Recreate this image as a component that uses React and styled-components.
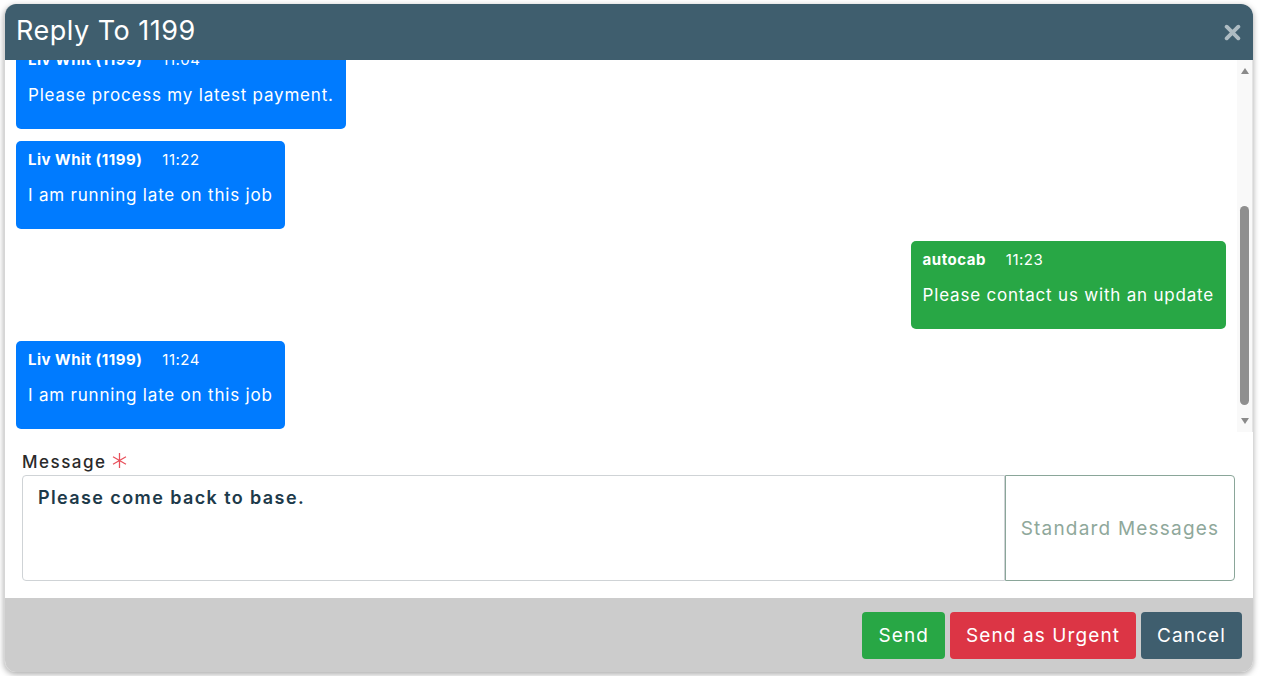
import React, { useLayoutEffect, useRef, useState } from 'react'
import styled, { createGlobalStyle } from 'styled-components'

const GlobalStyle = createGlobalStyle`
  html, body {
    margin: 0;
    padding: 0;
    background: #ffffff;
    font-family: Inter, "Noto Sans", Arial, sans-serif;
  }
`

const messages = [
  { from: 'Liv Whit (1199)', time: '10:41', text: 'On my way to the pickup', mine: false },
  { from: 'autocab', time: '10:52', text: 'Thanks, keep us posted', mine: true },
  { from: 'Liv Whit (1199)', time: '11:04', text: 'Please process my latest payment.', mine: false },
  { from: 'Liv Whit (1199)', time: '11:22', text: 'I am running late on this job', mine: false },
  { from: 'autocab', time: '11:23', text: 'Please contact us with an update', mine: true },
  { from: 'Liv Whit (1199)', time: '11:24', text: 'I am running late on this job', mine: false },
]

const ReplyDialog = () => {
  const listRef = useRef(null)
  const trackRef = useRef(null)
  const [thumb, setThumb] = useState({ top: 0, height: 0 })

  useLayoutEffect(() => {
    const list = listRef.current
    const track = trackRef.current
    if (!list || !track) return
    list.scrollTop = 231
    const ratio = list.clientHeight / list.scrollHeight
    const len = track.clientHeight
    setThumb({
      top: Math.round((list.scrollTop / list.scrollHeight) * len),
      height: Math.round(ratio * len),
    })
  }, [])

  return (
    <Page>
      <GlobalStyle />
      <Modal>
        <Header>
          <Title>Reply To 1199</Title>
          <CloseButton aria-label="Close">
            <svg width="17" height="17" viewBox="0 0 16 16">
              <path d="M2.5 2.5 L13.5 13.5 M13.5 2.5 L2.5 13.5" stroke="#aebcc3" strokeWidth="3.6" strokeLinecap="round" />
            </svg>
          </CloseButton>
        </Header>
        <Conversation>
          <MessageList ref={listRef}>
            {messages.map((m, i) => (
              <Bubble key={i} $mine={m.mine}>
                <BubbleHead>
                  <Sender>{m.from}</Sender>
                  <Time>{m.time}</Time>
                </BubbleHead>
                <BubbleText>{m.text}</BubbleText>
              </Bubble>
            ))}
          </MessageList>
          <ScrollBar>
            <ArrowButton $dir="up" />
            <Track ref={trackRef}>
              <Thumb style={{ marginTop: thumb.top, height: thumb.height }} />
            </Track>
            <ArrowButton $dir="down" />
          </ScrollBar>
        </Conversation>
        <Compose>
          <Label>
            Message
            <svg width="17" height="17" viewBox="0 0 16 16">
              <path d="M8 1 V15 M1.9 4.5 L14.1 11.5 M14.1 4.5 L1.9 11.5" stroke="#e8505b" strokeWidth="1.2" />
            </svg>
          </Label>
          <InputRow>
            <MessageInput defaultValue="Please come back to base." />
            <StandardButton>Standard Messages</StandardButton>
          </InputRow>
        </Compose>
        <Footer>
          <ActionButton $bg="#28a745">Send</ActionButton>
          <ActionButton $bg="#dc3545">Send as Urgent</ActionButton>
          <ActionButton $bg="#3f5e6e">Cancel</ActionButton>
        </Footer>
      </Modal>
    </Page>
  )
}

export default ReplyDialog

const Page = styled.div`
  padding: 4px;
`

const Modal = styled.div`
  width: 1249px;
  height: 668px;
  display: flex;
  flex-direction: column;
  border-radius: 12px;
  overflow: hidden;
  background: #ffffff;
  box-shadow: 0 2px 6px rgba(0, 0, 0, 0.35);
  box-sizing: border-box;
  border-left: 1px solid #d6d6d6;
`

const Header = styled.div`
  height: 56px;
  flex: none;
  display: flex;
  align-items: center;
  justify-content: space-between;
  background: #3f5e6e;
  padding: 0 12px 0 11px;
`

const Title = styled.h1`
  margin: 0 0 3px;
  font-size: 27px;
  font-weight: 400;
  color: #ffffff;
  letter-spacing: 0.5px;
`

const CloseButton = styled.button`
  border: none;
  background: none;
  padding: 0;
  display: flex;
  cursor: pointer;
`

const Conversation = styled.div`
  height: 372px;
  flex: none;
  display: flex;
`

const MessageList = styled.div`
  flex: 1;
  overflow: hidden;
  display: flex;
  flex-direction: column;
  gap: 12px;
  padding: 12px 11px 12px 11px;
  box-sizing: border-box;
`

const ScrollBar = styled.div`
  width: 15px;
  flex: none;
  display: flex;
  flex-direction: column;
  background: #f9f9f9;
  border-right: 1px solid #e4e4e4;
`

const ArrowButton = styled.div`
  height: 22px;
  flex: none;
  display: flex;
  align-items: center;
  justify-content: center;

  &::before {
    content: '';
    width: 0;
    height: 0;
    border-left: 4px solid transparent;
    border-right: 4px solid transparent;
    ${p => (p.$dir === 'up'
      ? 'border-bottom: 6px solid #8a8a8a;'
      : 'border-top: 6px solid #8a8a8a;')}
  }
`

const Track = styled.div`
  flex: 1;
  display: flex;
  flex-direction: column;
  align-items: center;
`

const Thumb = styled.div`
  width: 9px;
  border-radius: 5px;
  background: #8f8f8f;
`

const Bubble = styled.div`
  align-self: ${p => (p.$mine ? 'flex-end' : 'flex-start')};
  flex: none;
  height: 88px;
  box-sizing: border-box;
  padding: 8px 12px 0;
  border-radius: 5px;
  color: #ffffff;
  background: ${p => (p.$mine ? '#28a745' : '#007bff')};
`

const BubbleHead = styled.div`
  display: flex;
  gap: 20px;
  height: 20px;
  align-items: center;
  font-size: 15px;
`

const Sender = styled.span`
  font-weight: 700;
  letter-spacing: 0.5px;
`

const Time = styled.span`
  font-weight: 400;
  letter-spacing: 0.5px;
`

const BubbleText = styled.div`
  margin-top: 16px;
  font-size: 17px;
  line-height: 20px;
  letter-spacing: 0.8px;
  white-space: nowrap;
`

const Compose = styled.div`
  flex: 1;
  padding: 20px 18px 0 17px;
`

const Label = styled.div`
  display: flex;
  align-items: flex-start;
  gap: 4px;
  font-size: 17px;
  font-weight: 500;
  letter-spacing: 1.5px;
  color: #2a2a2a;
  height: 23px;
  line-height: 21px;
`

const InputRow = styled.div`
  display: flex;
  height: 106px;
`

const MessageInput = styled.textarea`
  flex: 1;
  resize: none;
  box-sizing: border-box;
  border: 1px solid #cfd3d6;
  border-radius: 4px 0 0 4px;
  padding: 11px 15px;
  font-family: inherit;
  font-size: 18px;
  font-weight: 600;
  letter-spacing: 1.4px;
  color: #1d3a4a;
  outline: none;
`

const StandardButton = styled.button`
  width: 230px;
  box-sizing: border-box;
  border: 1px solid #8aa699;
  border-radius: 0 4px 4px 0;
  background: #ffffff;
  font-family: inherit;
  font-size: 19px;
  letter-spacing: 1.2px;
  color: #8fa89b;
  cursor: pointer;
`

const Footer = styled.div`
  height: 74px;
  flex: none;
  display: flex;
  justify-content: flex-end;
  align-items: center;
  gap: 5px;
  padding: 0 11px;
  background: #cccccc;
`

const ActionButton = styled.button`
  height: 47px;
  padding: 0 16px;
  border: none;
  border-radius: 4px;
  background: ${p => p.$bg};
  color: #ffffff;
  font-family: inherit;
  font-size: 19px;
  letter-spacing: 1.1px;
  cursor: pointer;
`
